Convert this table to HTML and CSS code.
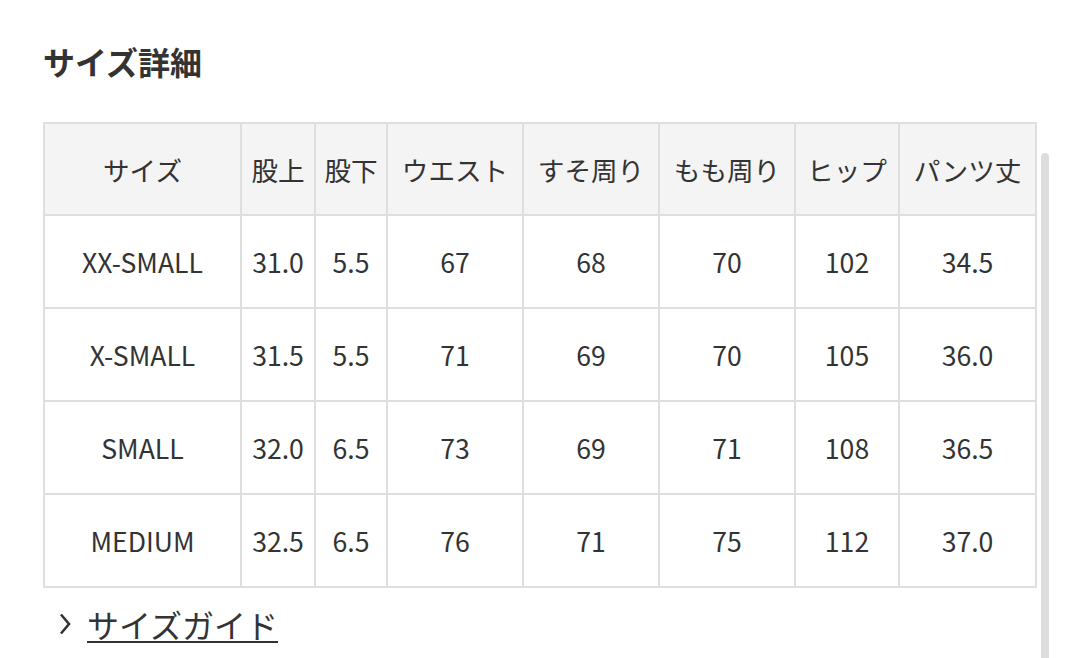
FILE: index.html
```html
<!DOCTYPE html>
<html lang="ja">
<head>
<meta charset="utf-8">
<link rel="stylesheet" href="styles.css">
</head>
<body>
<div class="page">
  <h2 class="title">サイズ詳細</h2>
  <table class="size-table">
    <colgroup>
      <col class="c-size"><col class="c-a"><col class="c-b"><col class="c-m"><col class="c-m"><col class="c-m"><col class="c-h"><col class="c-l">
    </colgroup>
    <thead>
      <tr><th>サイズ</th><th>股上</th><th>股下</th><th>ウエスト</th><th>すそ周り</th><th>もも周り</th><th>ヒップ</th><th>パンツ丈</th></tr>
    </thead>
    <tbody>
      <tr><td>XX-SMALL</td><td>31.0</td><td>5.5</td><td>67</td><td>68</td><td>70</td><td>102</td><td>34.5</td></tr>
      <tr><td>X-SMALL</td><td>31.5</td><td>5.5</td><td>71</td><td>69</td><td>70</td><td>105</td><td>36.0</td></tr>
      <tr><td>SMALL</td><td>32.0</td><td>6.5</td><td>73</td><td>69</td><td>71</td><td>108</td><td>36.5</td></tr>
      <tr><td>MEDIUM</td><td>32.5</td><td>6.5</td><td>76</td><td>71</td><td>75</td><td>112</td><td>37.0</td></tr>
    </tbody>
  </table>
  <a class="guide" href="#"><svg class="chev" width="12" height="22" viewBox="0 0 12 22"><path d="M2 1.5 L10 11 L2 20.5" fill="none" stroke="#333" stroke-width="2.6"/></svg><span class="guide-text">サイズガイド</span></a>
</div>
<div class="scrollbar"></div>
</body>
</html>
```
FILE: styles.css
```css
html, body {
  margin: 0;
  padding: 0;
  background: #fff;
}
body {
  font-family: "Noto Sans CJK JP", "Noto Sans", sans-serif;
  color: #333;
  width: 1080px;
  height: 658px;
  overflow: hidden;
  position: relative;
}
.page {
  padding: 38px 0 0 43px;
}
.title {
  margin: 0;
  font-size: 32px;
  font-weight: 700;
  line-height: 46px;
  color: #333;
}
.size-table {
  margin-top: 38px;
  border-collapse: collapse;
  table-layout: fixed;
  width: 992px;
  border: 2px solid #dedede;
}
.c-size { width: 197px; }
.c-a { width: 74px; }
.c-b { width: 72px; }
.c-m { width: 136px; }
.c-h { width: 104px; }
.c-l { width: 137px; }
.size-table th,
.size-table td {
  border: 2px solid #dedede;
  text-align: center;
  vertical-align: middle;
  font-size: 26.6px;
  font-weight: 400;
  color: #333;
  padding: 0;
  white-space: nowrap;
}
.size-table th {
  background: #f4f4f4;
  height: 90px;
}
.size-table td {
  height: 91px;
}
.guide {
  display: inline-flex;
  align-items: center;
  margin-top: 14px;
  margin-left: 16px;
  text-decoration: none;
  color: #333;
}
.chev {
  margin-right: 16px;
}
.guide-text {
  font-size: 32px;
  line-height: 44px;
  text-decoration: underline;
  text-decoration-thickness: 2px;
  text-underline-offset: 3px;
}
.scrollbar {
  position: absolute;
  left: 1041px;
  top: 153px;
  width: 8px;
  height: 520px;
  background: #dddddd;
  border-radius: 4px;
}
```
